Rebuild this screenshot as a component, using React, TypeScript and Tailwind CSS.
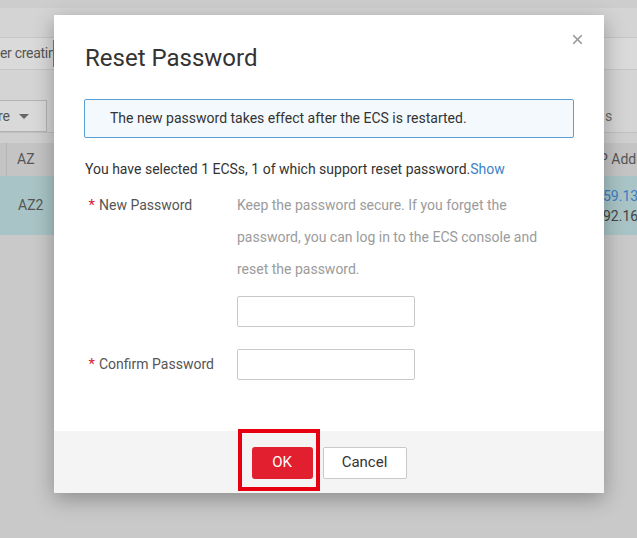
import { X } from "lucide-react"

function BackgroundPage() {
  return (
    <div className="flex flex-col text-[14px] text-[#4a4a4a]">
      <div className="h-[8px] bg-[#cdcdcd]" />
      <div className="h-[30px] bg-[#d4d4d4] border-b border-[#c6c6c6]" />
      <div className="h-[32px] bg-[#dadada] border-b border-[#c6c6c6] flex items-center">
        <span className="w-[53px] overflow-hidden whitespace-nowrap text-[14px] tracking-[-0.3px] text-[#555]">
          er creating
        </span>
        <span className="w-[4px] h-[27px] bg-[#3f8bd3]" />
      </div>
      <div className="h-[30px] bg-[#d4d4d4]" />
      <div className="h-[33px] bg-[#d4d4d4] border-b border-[#bfbfbf] flex justify-between items-stretch">
        <div className="w-[47px] border border-[#b3b3b3] border-l-0 bg-[#d9d9d9] flex items-center overflow-hidden">
          <span className="whitespace-nowrap -ml-[2px] text-[#555]">re</span>
          <span className="ml-[9px] w-0 h-0 border-l-[5px] border-r-[5px] border-t-[5px] border-l-transparent border-r-transparent border-t-[#666]" />
        </div>
        <div className="w-[34px] flex items-center text-[#666] overflow-hidden">
          <span className="ml-[2px]">s</span>
        </div>
      </div>
      <div className="h-[10px] bg-[#cfcfcf]" />
      <div className="h-[33px] bg-[#c4c4c4] flex justify-between items-center">
        <div className="flex items-center h-full">
          <div className="w-[7px] h-full border-r border-[#b5b5b5]" />
          <span className="ml-[10px] text-[#555]">AZ</span>
        </div>
        <span className="w-[38px] whitespace-nowrap overflow-hidden text-[#555]">P Address</span>
      </div>
      <div className="h-[59px] bg-[#a9c4c6] flex justify-between items-center">
        <span className="ml-[18px] text-[#555]">AZ2</span>
        <div className="w-[34px] overflow-hidden flex flex-col leading-[20px]">
          <span className="text-[#3b7cc4] whitespace-nowrap">59.135</span>
          <span className="text-[#444] whitespace-nowrap">92.168</span>
        </div>
      </div>
      <div className="h-[304px] bg-[#c9c9c9]" />
    </div>
  )
}

function ResetPasswordModal() {
  return (
    <div className="absolute left-[54px] top-[15px] w-[550px] h-[478px] bg-white shadow-[0_6px_20px_rgba(0,0,0,0.3)] flex flex-col">
      <button className="absolute right-[19px] top-[17px] text-[#9a9a9a]">
        <X size={15} strokeWidth={2.8} />
      </button>

      <div className="flex-1 px-[30px] pt-[27px] text-[14px] text-[#333]">
        <h2 className="text-[24px] leading-[32px] text-[#333] ml-[1px]">Reset Password</h2>

        <div className="mt-[25px] h-[39px] w-[490px] border border-[#5a9fd6] bg-[#f3f9fd] rounded-[2px] flex items-center pl-[25px]">
          The new password takes effect after the ECS is restarted.
        </div>

        <p className="mt-[20px] ml-[1px] leading-[22px]">
          You have selected 1 ECSs, 1 of which support reset password.
          <span className="text-[#3b82c8]">Show</span>
        </p>

        <div className="mt-[9px] flex">
          <div className="w-[153px] shrink-0 flex items-start leading-[32px] text-[#555]">
            <span className="text-[#d9242f] w-[15px] text-right pr-[4px] text-[15px]">*</span>
            New Password
          </div>
          <div className="flex flex-col">
            <p className="w-[315px] leading-[32px] text-[#9b9b9b]">
              Keep the password secure. If you forget the password, you can log in to the ECS console and reset the
              password.
            </p>
            <input type="password" className="mt-[11px] w-[178px] h-[31px] border border-[#c9c9c9] rounded-[2px] outline-none" />
          </div>
        </div>

        <div className="mt-[22px] flex items-center">
          <div className="w-[153px] shrink-0 flex items-center text-[#555]">
            <span className="text-[#d9242f] w-[15px] text-right pr-[4px] text-[15px]">*</span>
            Confirm Password
          </div>
          <input type="password" className="w-[178px] h-[31px] border border-[#c9c9c9] rounded-[2px] outline-none" />
        </div>
      </div>

      <div className="h-[62px] bg-[#f4f4f4] flex items-center justify-center gap-[10px] pt-[1px]">
        <div className="relative">
          <button className="w-[61px] h-[32px] bg-[#e21f2f] text-white text-[15px] rounded-[3px]">OK</button>
          <div className="absolute left-[-14px] top-[-18px] w-[82px] h-[62px] border-[4px] border-[#e60012] pointer-events-none" />
        </div>
        <button className="w-[84px] h-[32px] bg-white border border-[#c9c9c9] text-[#333] text-[15px] rounded-[2px]">
          Cancel
        </button>
      </div>
    </div>
  )
}

export default function App() {
  return (
    <div className="relative w-[637px] h-[538px] overflow-hidden bg-[#c9c9c9]" style={{ fontFamily: "Roboto, 'Liberation Sans', sans-serif" }}>
      <BackgroundPage />
      <ResetPasswordModal />
    </div>
  )
}
